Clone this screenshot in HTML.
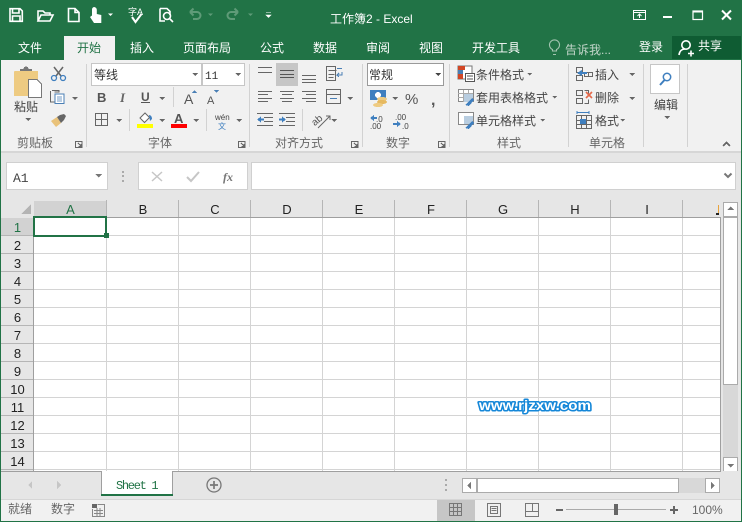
<!DOCTYPE html>
<html><head><meta charset="utf-8"><style>
html,body{margin:0;padding:0;width:742px;height:522px;overflow:hidden;background:#fff}
svg{display:block}
text{font-family:"Liberation Sans","Noto Sans CJK SC",sans-serif;font-size:12px;fill:#444}
.t{fill:#fff}.g{fill:#666}.c{text-anchor:middle}
.h{fill:#222;font-size:13px;text-anchor:middle}
.i{fill:none;stroke:#666;stroke-width:1}
.b{fill:none;stroke:#4a7fb5;stroke-width:1.2}
.w{fill:none;stroke:#fff;stroke-width:1.6}
.a{fill:#666}
</style></head><body>
<svg width="742" height="522" viewBox="0 0 742 522" xmlns="http://www.w3.org/2000/svg" shape-rendering="crispEdges">
<rect width="742" height="522" fill="#217346"/>
<!-- title bar -->
<text x="330" y="23" class="t">工作簿2 - Excel</text>
<g shape-rendering="auto">
<path class="w" d="M10 8.700H20L22.300 11V21.300H10ZM12.500 9V13H19V9M12.500 21V16H20V21"/>
<path class="w" d="M38 21V11H43L45 13H50V15M38 21L41 15H53L50 21Z"/>
<path class="w" d="M68.500 8.500H75L79 12.500V21.500H68.500ZM75 8.500V12.500H79"/>
<path d="M94 7a2.800 2.800 0 0 1 2.800 2.800V14l4.500 1V23H94L90 17L92 15.500V9.800A2.800 2.800 0 0 1 94 7Z" fill="#fff"/>
<path d="M108 13.500h5l-2.500 2.500z" fill="#fff"/>
<text x="128" y="15" class="t" style="font-size:9px">字A</text>
<path d="M132 17l3.500 5 6-8" fill="none" stroke="#fff" stroke-width="2"/>
<path class="w" d="M160 8.500H167L170 11.500V15M160 8.500V21H165"/><circle cx="167" cy="16" r="3.500" class="w"/><path class="w" d="M169.500 18.500L173 22"/>
<path d="M190 12H197A3.500 3.500 0 0 1 197 19H193M190 12L193.500 8.500M190 12L193.500 15.500" fill="none" stroke="#5f9b78" stroke-width="2"/>
<path d="M208 13.500h5l-2.500 2.500z" fill="#5f9b78"/>
<path d="M238 12H231A3.500 3.500 0 0 0 231 19H235M238 12L234.500 8.500M238 12L234.500 15.500" fill="none" stroke="#5f9b78" stroke-width="2"/>
<path d="M248 13.500h5l-2.500 2.500z" fill="#5f9b78"/>
<path d="M266 12.500h5M266 15h5l-2.500 2.500z" fill="#fff" stroke="#fff" stroke-width=".6"/>
<rect x="633.500" y="10.500" width="12" height="9" fill="none" stroke="#fff"/><path d="M633 12.500H646M639.500 18V14.500M637.500 16L639.500 14L641.500 16" fill="none" stroke="#fff"/>
<rect x="663" y="16" width="9" height="2" fill="#fff"/>
<rect x="693" y="11" width="9.500" height="8.500" fill="none" stroke="#fff" stroke-width="1.200"/><rect x="693" y="10.500" width="9.500" height="2" fill="#fff"/>
<path d="M722 10.500L731 19.500M731 10.500L722 19.500" stroke="#fff" stroke-width="2"/>
</g>
<!-- tabs -->
<rect x="672" y="36" width="69" height="23" fill="#0f5c33"/>
<text x="18" y="52" class="t">文件</text>
<rect x="64" y="36" width="51" height="24" fill="#f1f1f1"/>
<text x="77" y="52" style="fill:#217346">开始</text>
<text x="130" y="52" class="t">插入</text>
<text x="183" y="52" class="t">页面布局</text>
<text x="260" y="52" class="t">公式</text>
<text x="313" y="52" class="t">数据</text>
<text x="366" y="52" class="t">审阅</text>
<text x="419" y="52" class="t">视图</text>
<text x="472" y="52" class="t">开发工具</text>
<g shape-rendering="auto"><path d="M553 54.500h3M552.500 51v-1.500a5 5 0 1 1 4 0V51Z" fill="none" stroke="#a3c4b0" stroke-width="1.100"/></g>
<text x="565" y="54" style="fill:#c3d6ca">告诉我...</text>
<text x="639" y="51" class="t">登录</text>
<text x="698" y="50" class="t">共享</text>
<g shape-rendering="auto"><circle cx="686" cy="45" r="4.200" class="w"/><path class="w" d="M679 55c.5-4 3-6 6-6M688 53.500h6M691 50.500v6"/></g>
<!-- ribbon -->
<rect x="1" y="60" width="740" height="91" fill="#f1f1f1"/>
<rect x="1" y="151" width="740" height="2" fill="#d6d6d6"/>
<rect x="1" y="153" width="740" height="318" fill="#e6e6e6"/>
<rect x="64" y="59" width="51" height="2" fill="#f1f1f1"/>
<g fill="#d2d2d2">
<rect x="86" y="64" width="1" height="83"/><rect x="249" y="64" width="1" height="83"/><rect x="362" y="64" width="1" height="83"/><rect x="449" y="64" width="1" height="83"/><rect x="568" y="64" width="1" height="83"/><rect x="643" y="64" width="1" height="83"/><rect x="687" y="64" width="1" height="83"/>
<rect x="173" y="87" width="1" height="20"/><rect x="129" y="109" width="1" height="22"/><rect x="206" y="109" width="1" height="22"/><rect x="302" y="109" width="1" height="22"/>
</g>
<!-- clipboard -->
<rect x="14" y="71" width="24" height="25" rx="1" fill="#eecb82"/>
<path d="M20 71v-2h3.500a2 2 0 0 1 5 0H32v2z" fill="#777"/>
<path d="M28.500 79.500H37L41.500 84V97.500H28.500Z" fill="#fff" stroke="#777"/>
<text x="14" y="111">粘贴</text>
<path class="a" d="M25 118h6l-3 3z"/>
<g shape-rendering="auto">
<path d="M54 67L61 76M63 67L56 76" stroke="#666" stroke-width="1.500" fill="none"/>
<circle cx="54" cy="78" r="2.500" fill="none" stroke="#3f7fbf" stroke-width="1.300"/><circle cx="63" cy="78" r="2.500" fill="none" stroke="#3f7fbf" stroke-width="1.300"/>
<path class="i" d="M50.500 91V102H55M54.500 92H59V90.500H52"/>
<rect x="55" y="94" width="9" height="9.500" fill="#fff" stroke="#4a7fb5"/><path d="M57 97h5M57 99h5M57 101h5" stroke="#4a7fb5" stroke-width=".8"/>
<path class="a" d="M72 97h6l-3 3z"/>
<path d="M51 121l6-4 4 6-5 4z" fill="#e9c27a"/><path d="M57 117l4 6 3-3 2-4-2-2-4 1z" fill="#666"/>
</g>
<text x="17" y="147" class="g">剪贴板</text>
<path class="i" d="M75.500 141.500H82V147.500H75.500Z" stroke="#aaa"/><path d="M78 143L81 146M81 144V146.500H78.500" stroke="#666" fill="none"/>
<!-- font -->
<rect x="91.500" y="63.500" width="110" height="22" fill="#fff" stroke="#c6c6c6"/>
<rect x="202.500" y="63.500" width="42" height="22" fill="#fff" stroke="#c6c6c6"/>
<text x="94" y="79" style="fill:#333">等线</text>
<text x="205" y="79" style="font-family:'Liberation Mono',monospace;fill:#333;font-size:11px">11</text>
<path class="a" d="M192 73h6l-3 3zM235 73h6l-3 3z"/>
<text x="97" y="102" style="font-weight:bold;font-size:13px;fill:#555">B</text>
<text x="120" y="102" style="font-style:italic;font-family:'Liberation Serif';font-weight:bold;font-size:13px;fill:#666">I</text>
<text x="141" y="101" style="font-weight:bold;font-size:12px;fill:#555">U</text><rect x="141" y="102" width="9" height="1" fill="#555"/>
<path class="a" d="M159 97h6l-3 3z"/>
<text x="184" y="104" style="font-size:14px;fill:#555">A</text><path d="M192 93h5l-2.500-3z" fill="#4a7fb5"/>
<text x="207" y="104" style="font-size:11px;fill:#555">A</text><path d="M214 90h5l-2.500 3z" fill="#4a7fb5"/>
<rect x="95.500" y="113.500" width="12" height="12" fill="none" stroke="#666"/><path d="M101.500 113.500v12M95.500 119.500h12" stroke="#666"/>
<path class="a" d="M116 119h6l-3 3z"/>
<g shape-rendering="auto"><path d="M140 118l5-5 4.500 4.500-5 5z" fill="#fff" stroke="#666"/><path d="M149 115c2 0 3 2 3 4l-2 2z" fill="#3f7fbf"/></g>
<rect x="137" y="124" width="16" height="4" fill="#ffff00"/>
<path class="a" d="M159 119h6l-3 3z"/>
<text x="174" y="123" style="font-weight:bold;font-size:13px;fill:#555">A</text>
<rect x="171" y="124" width="16" height="4" fill="#ff0000"/>
<path class="a" d="M193 119h6l-3 3z"/>
<text x="215" y="120" style="font-size:8px;fill:#444">wén</text>
<text x="218" y="129" style="font-size:8px;fill:#3f7fbf">文</text>
<path class="a" d="M236 119h6l-3 3z"/>
<text x="148" y="147" class="g">字体</text>
<path class="i" d="M238.500 141.500H245V147.500H238.500Z" stroke="#aaa"/><path d="M241 143L244 146M244 144V146.500H241.500" stroke="#666" fill="none"/>
<!-- align -->
<rect x="276" y="63" width="22" height="23" fill="#c6c6c6"/>
<g stroke="#666" fill="none">
<path d="M258 67.500h14M258 72.500h14"/>
<path d="M280 70.500h14M280 74.500h14M280 77.500h14" stroke="#555"/>
<path d="M302 75.500h14M302 79.500h14M302 82.500h14"/>
<path d="M258 91.500h14M258 94.500h10M258 98.500h14M258 101.500h10"/>
<path d="M280 91.500h14M282 94.500h10M280 98.500h14M282 101.500h10"/>
<path d="M302 91.500h14M306 94.500h10M302 98.500h14M306 101.500h10"/>
<path d="M326.500 89.500h14v14h-14zM326.500 94.500h14"/>
<path d="M330 98.500h7" stroke="#4a7fb5"/>
<path d="M326.500 66.500h9v14h-9zM328.500 70.500h8M328.500 74.500h6M328.500 77.500h5"/>
<path d="M337 68.500h5" stroke="#4a7fb5"/><path d="M342 72v3h-5l2-2M337 75l2 2" stroke="#4a7fb5"/>
<path d="M257 113.500h16M264 117.500h9M264 121.500h9M257 125.500h16"/>
<path d="M279 113.500h16M286 117.500h9M286 121.500h9M279 125.500h16"/>
</g>
<path d="M257 119.500l4-3v2h3v2h-3v2z" fill="#3f7fbf"/>
<path d="M286 119.500l-4-3v2h-3v2h3v2z" fill="#3f7fbf"/>
<path class="a" d="M347 97h6l-3 3z"/>
<g shape-rendering="auto"><text x="311" y="124" transform="rotate(-40 316 120)" style="font-size:10px;fill:#555">ab</text><path d="M318 128L330 116M326 116h4v4" class="i"/></g>
<path class="a" d="M331 119h6l-3 3z"/>
<text x="275" y="147" class="g">对齐方式</text>
<path class="i" d="M351.500 141.500H358V147.500H351.500Z" stroke="#aaa"/><path d="M354 143L357 146M357 144V146.500H354.500" stroke="#666" fill="none"/>
<!-- number -->
<rect x="367.500" y="63.500" width="76" height="22" fill="#fff" stroke="#9a9a9a"/>
<text x="369" y="79" style="fill:#333">常规</text>
<path d="M435 73h6l-3 3z" fill="#444"/>
<rect x="370" y="90" width="16" height="10" fill="#3f7fbf"/><ellipse cx="378" cy="95" rx="3" ry="3" fill="#fff"/>
<ellipse cx="382" cy="99" rx="5" ry="2" fill="#eecb82"/><ellipse cx="382" cy="102" rx="5" ry="2" fill="#e6b960"/><ellipse cx="378" cy="105" rx="5" ry="2" fill="#eecb82"/>
<path class="a" d="M392 97h6l-3 3z"/>
<text x="405" y="104" style="font-size:15px;fill:#555">%</text>
<text x="431" y="105" style="font-size:16px;font-weight:bold;fill:#555">,</text>
<text x="376" y="122" style="font-size:8px;fill:#444">.0</text><text x="370" y="129" style="font-size:8px;fill:#444">.00</text>
<path d="M370 118l4-3v2h3v2h-3v2z" fill="#3f7fbf"/>
<text x="395" y="120" style="font-size:8px;fill:#444">.00</text><text x="402" y="129" style="font-size:8px;fill:#444">.0</text>
<path d="M401 124l-4-3v2h-4v2h4v2z" fill="#3f7fbf"/>
<text x="386" y="147" class="g">数字</text>
<path class="i" d="M438.500 141.500H445V147.500H438.500Z" stroke="#aaa"/><path d="M441 143L444 146M444 144V146.500H441.500" stroke="#666" fill="none"/>
<!-- styles -->
<rect x="458" y="66" width="14" height="13" fill="#fff" stroke="#777"/><rect x="458" y="66" width="7" height="4" fill="#d24726"/><rect x="458" y="70" width="5" height="4" fill="#4a7fb5"/><rect x="458" y="74" width="5" height="5" fill="#d24726"/>
<rect x="465.500" y="73.500" width="9" height="8" fill="#fff" stroke="#555"/><path d="M467 76h6M467 79h6" stroke="#555" fill="none" stroke-width=".7"/>
<text x="476" y="79">条件格式</text><path class="a" d="M527 73h5l-2.500 2.500z"/>
<rect x="458.500" y="89.500" width="15" height="12" fill="#fff" stroke="#888"/><path d="M458 93.500h15M463.500 90v12M468.500 90v12M458 97.500h15" stroke="#aaa"/>
<rect x="464" y="94" width="9" height="8" fill="#b8cde0"/><path d="M465 105l7-7 2 2-5 6z" fill="#3f7fbf"/>
<text x="476" y="102">套用表格格式</text><path class="a" d="M552 96h5l-2.500 2.500z"/>
<rect x="458.500" y="112.500" width="15" height="12" fill="#fff" stroke="#888"/><rect x="464" y="116" width="9" height="8" fill="#b8cde0"/><path d="M465 128l7-7 2 2-5 6z" fill="#3f7fbf"/>
<text x="476" y="125">单元格样式</text><path class="a" d="M540 119h5l-2.500 2.500z"/>
<text x="497" y="147" class="g">样式</text>
<!-- cells -->
<g fill="none" stroke="#666">
<path d="M576.500 67.500h6v5h-6zM576.500 75.500h6v5h-6zM584.500 72.500h4v4h-4zM588.500 72.500h4v4h-4z"/>
<path d="M576.500 90.500h6v5h-6zM576.500 98.500h6v5h-6zM584.500 90.500h4v4M584.500 103.500h4v-4"/>
<path d="M576.500 115.500h15v13h-15zM576.500 120.500h15M576.500 124.500h15M581.500 116v13M586.500 116v13"/>
</g>
<path d="M577 73l5-3v2h5v2h-5v2z" fill="#3f7fbf"/>
<path d="M586 92L592 98M592 92L586 98" stroke="#e5694a" stroke-width="1.600" shape-rendering="auto"/>
<path d="M577 112.500h12M577 111v3M589 111v3" stroke="#3f7fbf" fill="none"/><rect x="580" y="119" width="6" height="5" fill="#3f7fbf"/>
<text x="595" y="79">插入</text><path class="a" d="M629 73h6l-3 3z"/>
<text x="595" y="102">删除</text><path class="a" d="M629 97h6l-3 3z"/>
<text x="595" y="125">格式</text><path class="a" d="M620 119h5l-2.500 2.500z"/>
<text x="589" y="147" class="g">单元格</text>
<!-- edit -->
<rect x="650.500" y="64.500" width="29" height="29" fill="#fff" stroke="#c6c6c6"/>
<g shape-rendering="auto"><circle cx="667" cy="77" r="3.700" fill="none" stroke="#3f7fbf" stroke-width="1.500"/><path d="M664.500 80L660 85" stroke="#3f7fbf" stroke-width="2"/></g>
<text x="654" y="109">编辑</text>
<path class="a" d="M664 116h6l-3 3z"/>
<path d="M723 146l3.500-3.500 3.500 3.500" fill="none" stroke="#666" stroke-width="1.600"/>
<!-- formula bar -->
<rect x="6.500" y="162.500" width="101" height="27" fill="#fff" stroke="#d0d0d0"/>
<text x="13" y="182" style="font-family:'Liberation Mono',monospace;font-size:13px;fill:#444">A1</text>
<path d="M95 174h7l-3.500 3.500z" fill="#777"/>
<rect x="122" y="171" width="2" height="2" fill="#aaa"/><rect x="122" y="175" width="2" height="2" fill="#aaa"/><rect x="122" y="180" width="2" height="2" fill="#aaa"/>
<rect x="138.500" y="162.500" width="109" height="27" fill="#fff" stroke="#d0d0d0"/>
<g shape-rendering="auto"><path d="M152 172L162 181M162 172L152 181" stroke="#c6c6c6" stroke-width="1.500" fill="none"/><path d="M187 177l4 4 8-9" stroke="#c6c6c6" stroke-width="2" fill="none"/></g>
<text x="223" y="181" style="font-family:'Liberation Serif';font-style:italic;font-weight:bold;font-size:12px;fill:#777">fx</text>
<rect x="251.500" y="162.500" width="484" height="27" fill="#fff" stroke="#d0d0d0"/>
<path d="M724.500 173.500L728 177L731.500 173.500" fill="none" stroke="#777" stroke-width="2" shape-rendering="auto"/>
<!-- grid -->
<rect x="34" y="218" width="686" height="253" fill="#fff"/>
<rect x="34" y="201" width="73" height="16" fill="#d2d2d2"/>
<rect x="1" y="218" width="33" height="18" fill="#d2d2d2"/>
<g fill="#d4d4d4">
<rect x="106" y="218" width="1" height="253"/><rect x="178" y="218" width="1" height="253"/><rect x="250" y="218" width="1" height="253"/><rect x="322" y="218" width="1" height="253"/><rect x="394" y="218" width="1" height="253"/><rect x="466" y="218" width="1" height="253"/><rect x="538" y="218" width="1" height="253"/><rect x="610" y="218" width="1" height="253"/><rect x="682" y="218" width="1" height="253"/>
<rect x="34" y="235" width="686" height="1"/><rect x="34" y="253" width="686" height="1"/><rect x="34" y="271" width="686" height="1"/><rect x="34" y="289" width="686" height="1"/><rect x="34" y="307" width="686" height="1"/><rect x="34" y="325" width="686" height="1"/><rect x="34" y="343" width="686" height="1"/><rect x="34" y="361" width="686" height="1"/><rect x="34" y="379" width="686" height="1"/><rect x="34" y="397" width="686" height="1"/><rect x="34" y="415" width="686" height="1"/><rect x="34" y="433" width="686" height="1"/><rect x="34" y="451" width="686" height="1"/><rect x="34" y="469" width="686" height="1"/>
</g>
<g fill="#b5b5b5">
<rect x="106" y="200" width="1" height="17"/><rect x="178" y="200" width="1" height="17"/><rect x="250" y="200" width="1" height="17"/><rect x="322" y="200" width="1" height="17"/><rect x="394" y="200" width="1" height="17"/><rect x="466" y="200" width="1" height="17"/><rect x="538" y="200" width="1" height="17"/><rect x="610" y="200" width="1" height="17"/><rect x="682" y="200" width="1" height="17"/>
<rect x="1" y="253" width="33" height="1"/><rect x="1" y="271" width="33" height="1"/><rect x="1" y="289" width="33" height="1"/><rect x="1" y="307" width="33" height="1"/><rect x="1" y="325" width="33" height="1"/><rect x="1" y="343" width="33" height="1"/><rect x="1" y="361" width="33" height="1"/><rect x="1" y="379" width="33" height="1"/><rect x="1" y="397" width="33" height="1"/><rect x="1" y="415" width="33" height="1"/><rect x="1" y="433" width="33" height="1"/><rect x="1" y="451" width="33" height="1"/><rect x="1" y="469" width="33" height="1"/>
<rect x="1" y="235" width="33" height="1"/>
</g>
<rect x="34" y="217" width="687" height="1" fill="#9f9f9f"/>
<rect x="33" y="218" width="1" height="253" fill="#9f9f9f"/>
<rect x="720" y="217" width="1" height="254" fill="#9f9f9f"/>
<path d="M31 204V214H21Z" fill="#b4b4b4"/>
<text x="70.500" y="214" class="h" style="fill:#217346">A</text>
<text x="143" y="214" class="h">B</text><text x="215" y="214" class="h">C</text><text x="287" y="214" class="h">D</text><text x="359" y="214" class="h">E</text><text x="431" y="214" class="h">F</text><text x="503" y="214" class="h">G</text><text x="575" y="214" class="h">H</text><text x="647" y="214" class="h">I</text>
<rect x="716" y="201" width="4" height="16" fill="#e6e6e6"/>
<rect x="718" y="205" width="1" height="9" fill="#e8a33d"/><rect x="716" y="213" width="3" height="2" fill="#222"/>
<text x="17.500" y="232" class="h" style="fill:#217346">1</text>
<text x="17.500" y="250" class="h">2</text><text x="17.500" y="268" class="h">3</text><text x="17.500" y="286" class="h">4</text><text x="17.500" y="304" class="h">5</text><text x="17.500" y="322" class="h">6</text><text x="17.500" y="340" class="h">7</text><text x="17.500" y="358" class="h">8</text><text x="17.500" y="376" class="h">9</text><text x="17.500" y="394" class="h">10</text><text x="17.500" y="412" class="h">11</text><text x="17.500" y="430" class="h">12</text><text x="17.500" y="448" class="h">13</text><text x="17.500" y="466" class="h">14</text>
<!-- selection -->
<rect x="34" y="217" width="72" height="19" fill="none" stroke="#217346" stroke-width="2"/>
<rect x="104" y="233" width="5" height="5" fill="#217346"/>
<!-- watermark -->
<text x="479" y="410" textLength="112" lengthAdjust="spacingAndGlyphs" style="font-weight:bold;font-size:14px;fill:#fff;stroke:#1587d8;stroke-width:3px;paint-order:stroke;stroke-linejoin:round" shape-rendering="auto">www.rjzxw.com</text>
<!-- v scroll -->
<rect x="723" y="218" width="15" height="253" fill="#d8d8d8"/>
<rect x="723.500" y="202.500" width="14" height="14" fill="#fff" stroke="#ababab"/>
<path d="M727 210h7l-3.500-3.500z" fill="#777"/>
<rect x="723.500" y="217.500" width="14" height="167" fill="#fff" stroke="#ababab"/>
<rect x="723.500" y="457.500" width="14" height="14" fill="#fff" stroke="#ababab"/>
<path d="M727 464h7l-3.500 3.500z" fill="#777"/>
<!-- sheet tabs -->
<rect x="1" y="471" width="740" height="28" fill="#e6e6e6"/>
<rect x="1" y="471" width="720" height="1" fill="#9f9f9f"/>
<path d="M32 481l-4 4 4 4z" fill="#c6c6c6"/><path d="M57 481l4 4-4 4z" fill="#c6c6c6"/>
<rect x="101" y="471" width="72" height="25" fill="#9f9f9f"/>
<rect x="102" y="471" width="70" height="23" fill="#fff"/>
<rect x="101" y="494" width="72" height="2" fill="#217346"/>
<text x="116" y="489" style="font-family:'Liberation Mono',monospace;font-size:12px;fill:#217346;letter-spacing:-1.300px">Sheet 1</text>
<g shape-rendering="auto"><circle cx="214" cy="485" r="7" fill="none" stroke="#777" stroke-width="1.300"/><path d="M210 485h8M214 481v8" stroke="#777" stroke-width="1.700"/></g>
<rect x="445" y="479" width="2" height="2" fill="#aaa"/><rect x="445" y="484" width="2" height="2" fill="#aaa"/><rect x="445" y="489" width="2" height="2" fill="#aaa"/>
<rect x="462" y="478" width="257" height="15" fill="#d8d8d8"/>
<rect x="462.500" y="478.500" width="14" height="14" fill="#fff" stroke="#ababab"/><path d="M471 482l-4 3.500 4 3.500z" fill="#777"/>
<rect x="477.500" y="478.500" width="201" height="14" fill="#fff" stroke="#ababab"/>
<rect x="705.500" y="478.500" width="14" height="14" fill="#fff" stroke="#ababab"/><path d="M711 482l4 3.500-4 3.500z" fill="#777"/>
<!-- status -->
<rect x="1" y="499" width="740" height="22" fill="#f1f1f1"/>
<rect x="1" y="499" width="740" height="1" fill="#d6d6d6"/>
<text x="8" y="513" class="g">就绪</text>
<text x="51" y="513" class="g">数字</text>
<rect x="92" y="504" width="5" height="4" fill="#666"/><path d="M97.500 504.500h7v12h-12V509" fill="none" stroke="#888"/><path d="M94 510.500h9M94 513.500h9M97 508v8M100 508v8" stroke="#888" fill="none"/>
<rect x="437" y="500" width="38" height="21" fill="#c6c6c6"/>
<path d="M449.500 503.500h12v12h-12zM449.500 507.500h12M449.500 511.500h12M453.500 503.500v12M457.500 503.500v12" fill="none" stroke="#777"/>
<path d="M487.500 503.500h13v13h-13zM490.500 506.500h7v7h-7zM491.500 508.500h5M491.500 510.500h5" fill="none" stroke="#777"/>
<path d="M525.500 503.500h13v13h-13zM525.500 511.500h13M532.500 503.500v8" fill="none" stroke="#777"/>
<rect x="556" y="509" width="7" height="2" fill="#666"/>
<rect x="566" y="509" width="100" height="1" fill="#aaa"/>
<rect x="614" y="504" width="4" height="11" fill="#666"/>
<rect x="670" y="509" width="8" height="2" fill="#666"/><rect x="673" y="506" width="2" height="8" fill="#666"/>
<text x="692" y="514" class="g">100%</text>
</svg>
</body></html>
